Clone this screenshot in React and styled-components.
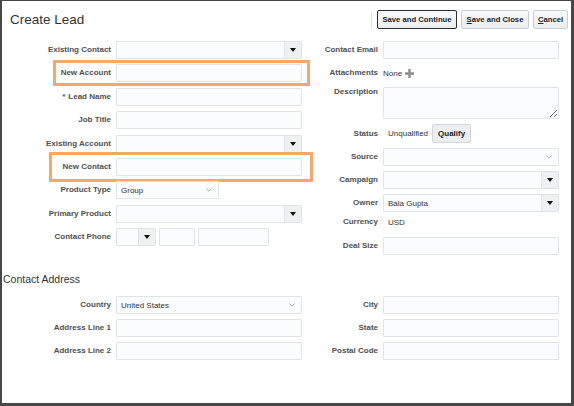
import styled, { createGlobalStyle, css } from "styled-components";

const GlobalStyle = createGlobalStyle`
  html, body {
    margin: 0;
    padding: 0;
    background: #fff;
  }
  body {
    font-family: "Liberation Sans", Arial, sans-serif;
  }
`;

const Frame = styled.div`
  width: 574px;
  height: 406px;
  box-sizing: border-box;
  border-style: solid;
  border-color: #474747;
  border-width: 1px 3px 3px 2px;
  display: flex;
  flex-direction: column;
  overflow: hidden;
`;

const Header = styled.div`
  height: 37px;
  display: flex;
  align-items: center;
  padding: 0 3px 0 8px;
`;

const Title = styled.h1`
  margin: 0;
  font-size: 13.5px;
  font-weight: normal;
  color: #333;
`;

const Toolbar = styled.div`
  margin-left: auto;
  display: flex;
  align-items: center;
  gap: 4px;
`;

const Separator = styled.span`
  width: 1px;
  height: 15px;
  background: #dcdfe2;
  margin-right: 1px;
`;

const Button = styled.button`
  width: ${(p) => p.$w}px;
  height: 19px;
  padding: 0;
  box-sizing: border-box;
  font-family: "Liberation Sans", Arial, sans-serif;
  font-size: 7.7px;
  font-weight: bold;
  color: #222;
  border-radius: 2px;
  border: 1px solid ${(p) => (p.$primary ? "#2b2b2b" : "#c8ced4")};
  background: linear-gradient(#f9fafb, #eceef0);
  u {
    text-decoration: underline;
  }
`;

const Form = styled.div`
  display: grid;
  grid-template-columns: 308px 1fr;
  padding-top: ${(p) => p.$top ?? 3}px;
`;

const Column = styled.div`
  --label-w: ${(p) => p.$label}px;
  display: flex;
  flex-direction: column;
  gap: ${(p) => p.$gap}px;
`;

const Row = styled.div`
  position: relative;
  display: grid;
  grid-template-columns: var(--label-w) max-content;
  column-gap: 5px;
  align-items: ${(p) => (p.$top ? "start" : "center")};
  height: ${(p) => p.$h || 18}px;
  ${(p) =>
    p.$mark &&
    css`
      &::after {
        content: "";
        position: absolute;
        pointer-events: none;
        border: 3px solid #f8a866;
        top: ${p.$mark[0]}px;
        right: ${p.$mark[1]}px;
        bottom: ${p.$mark[2]}px;
        left: ${p.$mark[3]}px;
      }
    `}
`;

const Label = styled.label`
  text-align: right;
  white-space: nowrap;
  font-size: 8px;
  line-height: 10px;
  font-weight: bold;
  color: #4f4f4f;
`;

const Star = styled.span`
  color: #2c5b8c;
  margin-right: 3px;
`;

const TextBox = styled.input`
  width: ${(p) => p.$w}px;
  height: 18px;
  box-sizing: border-box;
  margin: 0;
  padding: 0 4px;
  border: 1px solid #dfe4e8;
  border-radius: 1px;
  background: #fbfcfd;
  font-family: "Liberation Sans", Arial, sans-serif;
  font-size: 8px;
  color: #333;
  outline: none;
`;

const TextArea = styled.textarea`
  width: 176px;
  height: 32px;
  box-sizing: border-box;
  margin: 0;
  border: 1px solid #dfe4e8;
  border-radius: 1px;
  background: #fbfcfd;
  resize: both;
  outline: none;
`;

const Combo = styled.div`
  width: ${(p) => p.$w}px;
  height: 18px;
  box-sizing: border-box;
  display: flex;
  align-items: stretch;
  border: 1px solid #dfe4e8;
  border-radius: 1px;
  background: #fbfcfd;
`;

const Value = styled.span`
  flex: ${(p) => (p.$fixed ? "none" : 1)};
  display: flex;
  align-items: center;
  padding: 0 ${(p) => (p.$fixed ? 0 : 4)}px 0 ${(p) => (p.$pad ?? 4)}px;
  font-size: 8px;
  color: #333;
  white-space: nowrap;
`;

const DropButton = styled.span`
  width: 16px;
  display: flex;
  align-items: center;
  justify-content: center;
  border-left: 1px solid #dfe4e8;
  background: #eef0f2;
  &::before {
    content: "";
    border-left: 3px solid transparent;
    border-right: 3px solid transparent;
    border-top: 4px solid #111;
  }
`;

const Chevron = styled.svg`
  width: 6px;
  height: 4px;
  margin-right: 6px;
  align-self: center;
`;

const PhoneGroup = styled.div`
  display: flex;
  gap: 3px;
`;

const Inline = styled.div`
  display: flex;
  align-items: center;
  height: ${(p) => p.$h || 18}px;
`;

const Plus = styled.svg`
  width: 9px;
  height: 9px;
  margin-left: 3px;
`;

const SmallButton = styled.button`
  height: 19px;
  box-sizing: border-box;
  padding: 0 5px;
  margin-left: 4px;
  border: 1px solid #d2d7dc;
  border-radius: 2px;
  background: #eceef0;
  font-family: "Liberation Sans", Arial, sans-serif;
  font-size: 8px;
  font-weight: bold;
  color: #222;
`;

const Section = styled.h2`
  margin: 17px 0 10px;
  padding-left: 1px;
  font-size: 10.5px;
  line-height: 14px;
  font-weight: normal;
  color: #333;
`;

const Select = ({ w, value }) => (
  <Combo $w={w}>
    <Value>{value}</Value>
    <Chevron viewBox="0 0 6 4">
      <path d="M0.5 0.5 L3 3.2 L5.5 0.5" fill="none" stroke="#9a9a9a" strokeWidth="0.8" />
    </Chevron>
  </Combo>
);

const Lookup = ({ w, value }) => (
  <Combo $w={w}>
    <Value>{value}</Value>
    <DropButton />
  </Combo>
);

const Field = ({ label, required, children, ...rest }) => (
  <Row {...rest}>
    <Label>
      {required && <Star>*</Star>}
      {label}
    </Label>
    {children}
  </Row>
);

export default function App() {
  return (
    <Frame>
      <GlobalStyle />
      <Header>
        <Title>Create Lead</Title>
        <Toolbar>
          <Separator />
          <Button $w={80} $primary>Save and Continue</Button>
          <Button $w={68}><u>S</u>ave and Close</Button>
          <Button $w={35}><u>C</u>ancel</Button>
        </Toolbar>
      </Header>

      <Form>
        <Column $label={109} $gap={5.375}>
          <Field label="Existing Contact"><Lookup w={186} /></Field>
          <Field label="New Account" $mark={[-4, 0, -4, 51]}><TextBox $w={186} /></Field>
          <Field label="Lead Name" required><TextBox $w={186} /></Field>
          <Field label="Job Title"><TextBox $w={186} /></Field>
          <Field label="Existing Account"><Lookup w={186} /></Field>
          <Field label="New Contact" $mark={[-6, -3, -6, 47]}><TextBox $w={186} /></Field>
          <Field label="Product Type"><Select w={103} value="Group" /></Field>
          <Field label="Primary Product"><Lookup w={186} /></Field>
          <Field label="Contact Phone">
            <PhoneGroup>
              <Lookup w={40} />
              <TextBox $w={36} />
              <TextBox $w={71} />
            </PhoneGroup>
          </Field>
        </Column>

        <Column $label={68} $gap={5}>
          <Field label="Contact Email"><TextBox $w={176} /></Field>
          <Field label="Attachments">
            <Inline>
              <Value $fixed $pad={0}>None</Value>
              <Plus viewBox="0 0 9 9">
                <path d="M3.3 0h2.4v3.3H9v2.4H5.7V9H3.3V5.7H0V3.3h3.3z" fill="#8c8c8c" />
              </Plus>
            </Inline>
          </Field>
          <Field label="Description" $h={32} $top><TextArea /></Field>
          <Field label="Status" $h={19}>
            <Inline $h={19}>
              <Value $fixed $pad={5}>Unqualified</Value>
              <SmallButton>Qualify</SmallButton>
            </Inline>
          </Field>
          <Field label="Source"><Select w={176} /></Field>
          <Field label="Campaign"><Lookup w={176} /></Field>
          <Field label="Owner"><Lookup w={176} value="Bala Gupta" /></Field>
          <Field label="Currency" $h={15} $top>
            <Inline $h={10}><Value $fixed $pad={5}>USD</Value></Inline>
          </Field>
          <Field label="Deal Size"><TextBox $w={176} /></Field>
        </Column>
      </Form>

      <Section>Contact Address</Section>

      <Form $top={0}>
        <Column $label={109} $gap={5}>
          <Field label="Country"><Select w={186} value="United States" /></Field>
          <Field label="Address Line 1"><TextBox $w={186} /></Field>
          <Field label="Address Line 2"><TextBox $w={186} /></Field>
        </Column>
        <Column $label={68} $gap={5}>
          <Field label="City"><TextBox $w={176} /></Field>
          <Field label="State"><TextBox $w={176} /></Field>
          <Field label="Postal Code"><TextBox $w={176} /></Field>
        </Column>
      </Form>
    </Frame>
  );
}
